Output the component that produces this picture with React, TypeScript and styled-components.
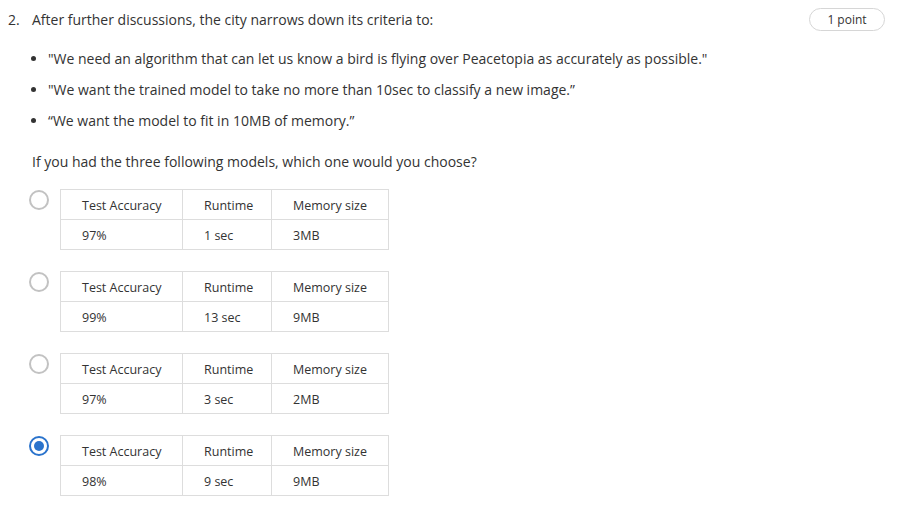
import React from 'react';
import styled, { createGlobalStyle } from 'styled-components';

const GlobalStyle = createGlobalStyle`
  html, body {
    margin: 0;
    padding: 0;
    background: #ffffff;
  }
  body {
    font-family: 'Open Sans', 'Liberation Sans', sans-serif;
    color: #333333;
  }
`;

const Page = styled.div`
  width: 905px;
  height: 523px;
  box-sizing: border-box;
  padding: 8px 20px 0 8px;
  overflow: hidden;
`;

const Header = styled.div`
  display: flex;
  align-items: flex-start;
`;

const Number = styled.div`
  width: 24px;
  flex-shrink: 0;
  font-size: 14px;
  line-height: 21px;
  padding-top: 1px;
`;

const Body = styled.div`
  flex: 1;
  font-size: 14px;
  line-height: 21px;
  padding-top: 1px;
`;

const Prompt = styled.p`
  margin: 0;
`;

const Criteria = styled.ul`
  margin: 18px 0 0;
  padding-left: 16px;
  list-style: disc;

  li {
    margin-bottom: 10px;
  }
  li:last-child {
    margin-bottom: 0;
  }
`;

const Question = styled.p`
  margin: 20px 0 0;
`;

const Points = styled.div`
  flex-shrink: 0;
  width: 76px;
  height: 23px;
  box-sizing: border-box;
  border: 1px solid #d6d6d6;
  border-radius: 12px;
  font-size: 12px;
  line-height: 21px;
  text-align: center;
  color: #333333;
`;

const Options = styled.div`
  display: flex;
  flex-direction: column;
  gap: 21px;
  margin-top: 17px;
  padding-left: 21px;
`;

const Option = styled.label`
  display: flex;
  align-items: flex-start;
  gap: 11px;
`;

const Radio = styled.span<{ checked?: boolean }>`
  width: 20px;
  height: 20px;
  box-sizing: border-box;
  margin-top: 1px;
  border-radius: 50%;
  border: 2px solid ${p => (p.checked ? '#2a73cc' : '#c2c2c2')};
  display: flex;
  align-items: center;
  justify-content: center;

  &::after {
    content: '';
    width: 10px;
    height: 10px;
    border-radius: 50%;
    background: ${p => (p.checked ? '#2a73cc' : 'transparent')};
  }
`;

const Table = styled.table`
  border-collapse: collapse;
  font-size: 12.5px;
  color: #333333;
`;

const Cell = styled.td<{ w: number }>`
  width: ${p => p.w}px;
  height: 30px;
  box-sizing: border-box;
  padding: 2px 0 0 21px;
  border: 1px solid #dddddd;
  white-space: nowrap;
`;

const widths = [122, 89, 117];
const headings = ['Test Accuracy', 'Runtime', 'Memory size'];

const models = [
  ['97%', '1 sec', '3MB'],
  ['99%', '13 sec', '9MB'],
  ['97%', '3 sec', '2MB'],
  ['98%', '9 sec', '9MB'],
];

const App: React.FC = () => {
  return (
    <Page>
      <GlobalStyle />
      <Header>
        <Number>2.</Number>
        <Body>
          <Prompt>After further discussions, the city narrows down its criteria to:</Prompt>
          <Criteria>
            <li>"We need an algorithm that can let us know a bird is flying over Peacetopia as accurately as possible."</li>
            <li>"We want the trained model to take no more than 10sec to classify a new image.”</li>
            <li>“We want the model to fit in 10MB of memory.”</li>
          </Criteria>
          <Question>If you had the three following models, which one would you choose?</Question>
        </Body>
        <Points>1 point</Points>
      </Header>
      <Options>
        {models.map((row, i) => (
          <Option key={i}>
            <Radio checked={i === 3} />
            <Table>
              <tbody>
                <tr>
                  {headings.map((h, j) => (
                    <Cell key={j} w={widths[j]}>{h}</Cell>
                  ))}
                </tr>
                <tr>
                  {row.map((v, j) => (
                    <Cell key={j} w={widths[j]}>{v}</Cell>
                  ))}
                </tr>
              </tbody>
            </Table>
          </Option>
        ))}
      </Options>
    </Page>
  );
};

export default App;
